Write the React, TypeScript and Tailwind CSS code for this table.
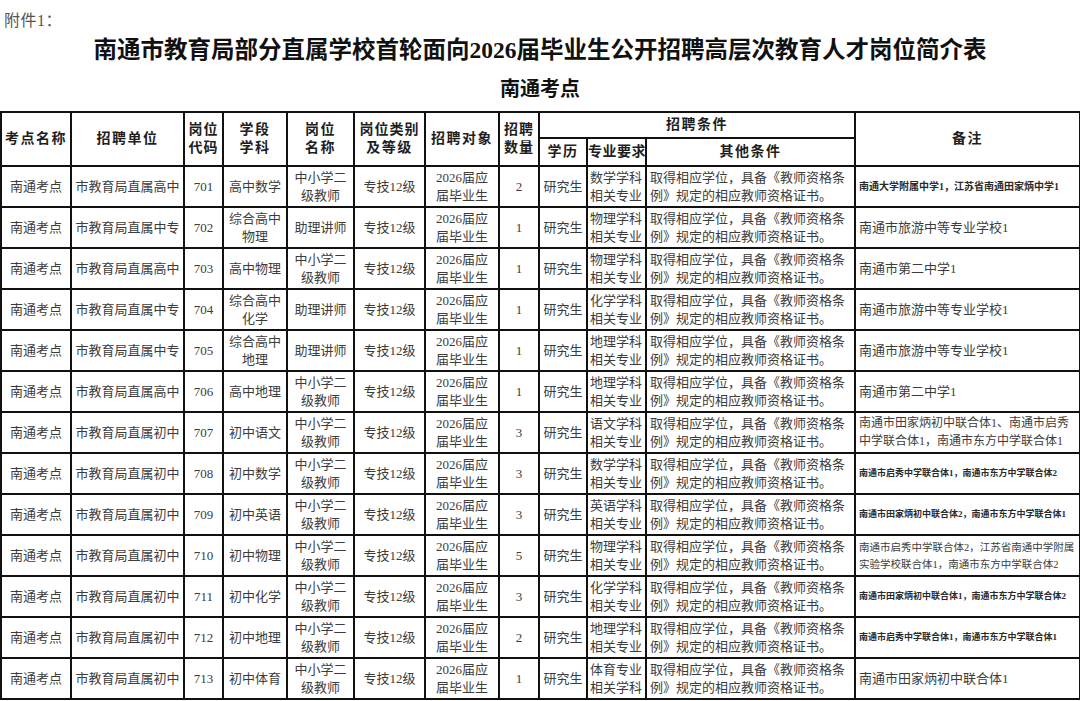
import React from "react";

type Row = {
  unit: string;
  code: string;
  subj: string[];
  title: string[];
  n: string;
  major: string[];
  note: string[];
  noteCls: string;
};

const T2 = ["中小学二", "级教师"];
const T1 = ["助理讲师"];
const NOTE13 = "text-[13px] leading-[18px]";
const NOTE10 = "text-[10px] leading-[14px] font-bold text-[#2a2a2a]";
const NOTE9 = "text-[9px] leading-[13px] font-bold text-[#2a2a2a]";

const rows: Row[] = [
  { unit: "市教育局直属高中", code: "701", subj: ["高中数学"], title: T2, n: "2", major: ["数学学科", "相关专业"], note: ["南通大学附属中学1，江苏省南通田家炳中学1"], noteCls: NOTE10 },
  { unit: "市教育局直属中专", code: "702", subj: ["综合高中", "物理"], title: T1, n: "1", major: ["物理学科", "相关专业"], note: ["南通市旅游中等专业学校1"], noteCls: NOTE13 },
  { unit: "市教育局直属高中", code: "703", subj: ["高中物理"], title: T2, n: "1", major: ["物理学科", "相关专业"], note: ["南通市第二中学1"], noteCls: NOTE13 },
  { unit: "市教育局直属中专", code: "704", subj: ["综合高中", "化学"], title: T1, n: "1", major: ["化学学科", "相关专业"], note: ["南通市旅游中等专业学校1"], noteCls: NOTE13 },
  { unit: "市教育局直属中专", code: "705", subj: ["综合高中", "地理"], title: T1, n: "1", major: ["地理学科", "相关专业"], note: ["南通市旅游中等专业学校1"], noteCls: NOTE13 },
  { unit: "市教育局直属高中", code: "706", subj: ["高中地理"], title: T2, n: "1", major: ["地理学科", "相关专业"], note: ["南通市第二中学1"], noteCls: NOTE13 },
  { unit: "市教育局直属初中", code: "707", subj: ["初中语文"], title: T2, n: "3", major: ["语文学科", "相关专业"], note: ["南通市田家炳初中联合体1、南通市启秀", "中学联合体1，南通市东方中学联合体1"], noteCls: "text-[12px] leading-[17.5px]" },
  { unit: "市教育局直属初中", code: "708", subj: ["初中数学"], title: T2, n: "3", major: ["数学学科", "相关专业"], note: ["南通市启秀中学联合体1，南通市东方中学联合体2"], noteCls: NOTE9 },
  { unit: "市教育局直属初中", code: "709", subj: ["初中英语"], title: T2, n: "3", major: ["英语学科", "相关专业"], note: ["南通市田家炳初中联合体2，南通市东方中学联合体1"], noteCls: NOTE9 },
  { unit: "市教育局直属初中", code: "710", subj: ["初中物理"], title: T2, n: "5", major: ["物理学科", "相关专业"], note: ["南通市启秀中学联合体2，江苏省南通中学附属", "实验学校联合体1，南通市东方中学联合体2"], noteCls: "text-[10.5px] leading-[17px]" },
  { unit: "市教育局直属初中", code: "711", subj: ["初中化学"], title: T2, n: "3", major: ["化学学科", "相关专业"], note: ["南通市田家炳初中联合体1，南通市东方中学联合体2"], noteCls: NOTE9 },
  { unit: "市教育局直属初中", code: "712", subj: ["初中地理"], title: T2, n: "2", major: ["地理学科", "相关专业"], note: ["南通市启秀中学联合体1，南通市东方中学联合体1"], noteCls: NOTE9 },
  { unit: "市教育局直属初中", code: "713", subj: ["初中体育"], title: T2, n: "1", major: ["体育专业", "相关学科"], note: ["南通市田家炳初中联合体1"], noteCls: NOTE13 },
];

function Lines({ items }: { items: string[] }) {
  return (
    <>
      {items.map((t, i) => (
        <div key={i} className="whitespace-nowrap">
          {t}
        </div>
      ))}
    </>
  );
}

const th = "border-2 border-[#111] text-center align-middle font-semibold text-[#1e1e1e] text-[14px] leading-[18px] tracking-[1.5px] p-0";
const td = "border-2 border-[#111] text-center align-middle p-0";

export default function App() {
  return (
    <div className="w-[1080px] h-[701px] overflow-hidden bg-white font-['Liberation_Serif','Noto_Sans_CJK_SC',serif] text-[#3c3c3c]">
      <div className="h-[34px] pl-[4px] pt-[11px] text-[16px] leading-[20px] tracking-[0.5px] text-[#555]">附件1：</div>
      <div className="h-[32px] text-center text-[23.5px] leading-[32px] font-bold text-[#111] whitespace-nowrap">
        南通市教育局部分直属学校首轮面向2026届毕业生公开招聘高层次教育人才岗位简介表
      </div>
      <div className="h-[45px] pt-[8px] text-center text-[20px] leading-[30px] font-bold text-[#111]">南通考点</div>
      <table className="w-[1079px] table-fixed border-collapse text-[13px] leading-[18px]">
        <colgroup>
          <col className="w-[70px]" />
          <col className="w-[113px]" />
          <col className="w-[39px]" />
          <col className="w-[64px]" />
          <col className="w-[67px]" />
          <col className="w-[71px]" />
          <col className="w-[74px]" />
          <col className="w-[40px]" />
          <col className="w-[48px]" />
          <col className="w-[59px]" />
          <col className="w-[209px]" />
          <col className="w-[225px]" />
        </colgroup>
        <thead>
          <tr className="h-[26px]">
            <th rowSpan={2} className={th}>考点名称</th>
            <th rowSpan={2} className={th}>招聘单位</th>
            <th rowSpan={2} className={th}>
              <div className="tracking-[1px]">岗位</div>
              <div className="tracking-[1px]">代码</div>
            </th>
            <th rowSpan={2} className={th}>
              <div>学段</div>
              <div>学科</div>
            </th>
            <th rowSpan={2} className={th}>
              <div>岗位</div>
              <div>名称</div>
            </th>
            <th rowSpan={2} className={th}>
              <div className="whitespace-nowrap tracking-[1px]">岗位类别</div>
              <div>及等级</div>
            </th>
            <th rowSpan={2} className={th}>招聘对象</th>
            <th rowSpan={2} className={th}>
              <div className="tracking-[1px]">招聘</div>
              <div className="tracking-[1px]">数量</div>
            </th>
            <th colSpan={3} className={th}>招聘条件</th>
            <th rowSpan={2} className={th}>备注</th>
          </tr>
          <tr className="h-[28px]">
            <th className={th}>学历</th>
            <th className={th + " whitespace-nowrap !tracking-[0.5px]"}>专业要求</th>
            <th className={th}>其他条件</th>
          </tr>
        </thead>
        <tbody>
          {rows.map((r) => (
            <tr key={r.code} className="h-[41px]">
              <td className={td}>南通考点</td>
              <td className={td + " whitespace-nowrap"}>{r.unit}</td>
              <td className={td}>{r.code}</td>
              <td className={td}>
                <Lines items={r.subj} />
              </td>
              <td className={td}>
                <Lines items={r.title} />
              </td>
              <td className={td}>专技12级</td>
              <td className={td}>
                <Lines items={["2026届应", "届毕业生"]} />
              </td>
              <td className={td}>{r.n}</td>
              <td className={td}>研究生</td>
              <td className={td + " text-left pl-[2px]"}>
                <Lines items={r.major} />
              </td>
              <td className={td + " text-left pl-[3px]"}>
                <Lines items={["取得相应学位，具备《教师资格条", "例》规定的相应教师资格证书。"]} />
              </td>
              <td className={td + " text-left pl-[3px] " + r.noteCls}>
                <Lines items={r.note} />
              </td>
            </tr>
          ))}
        </tbody>
      </table>
    </div>
  );
}
